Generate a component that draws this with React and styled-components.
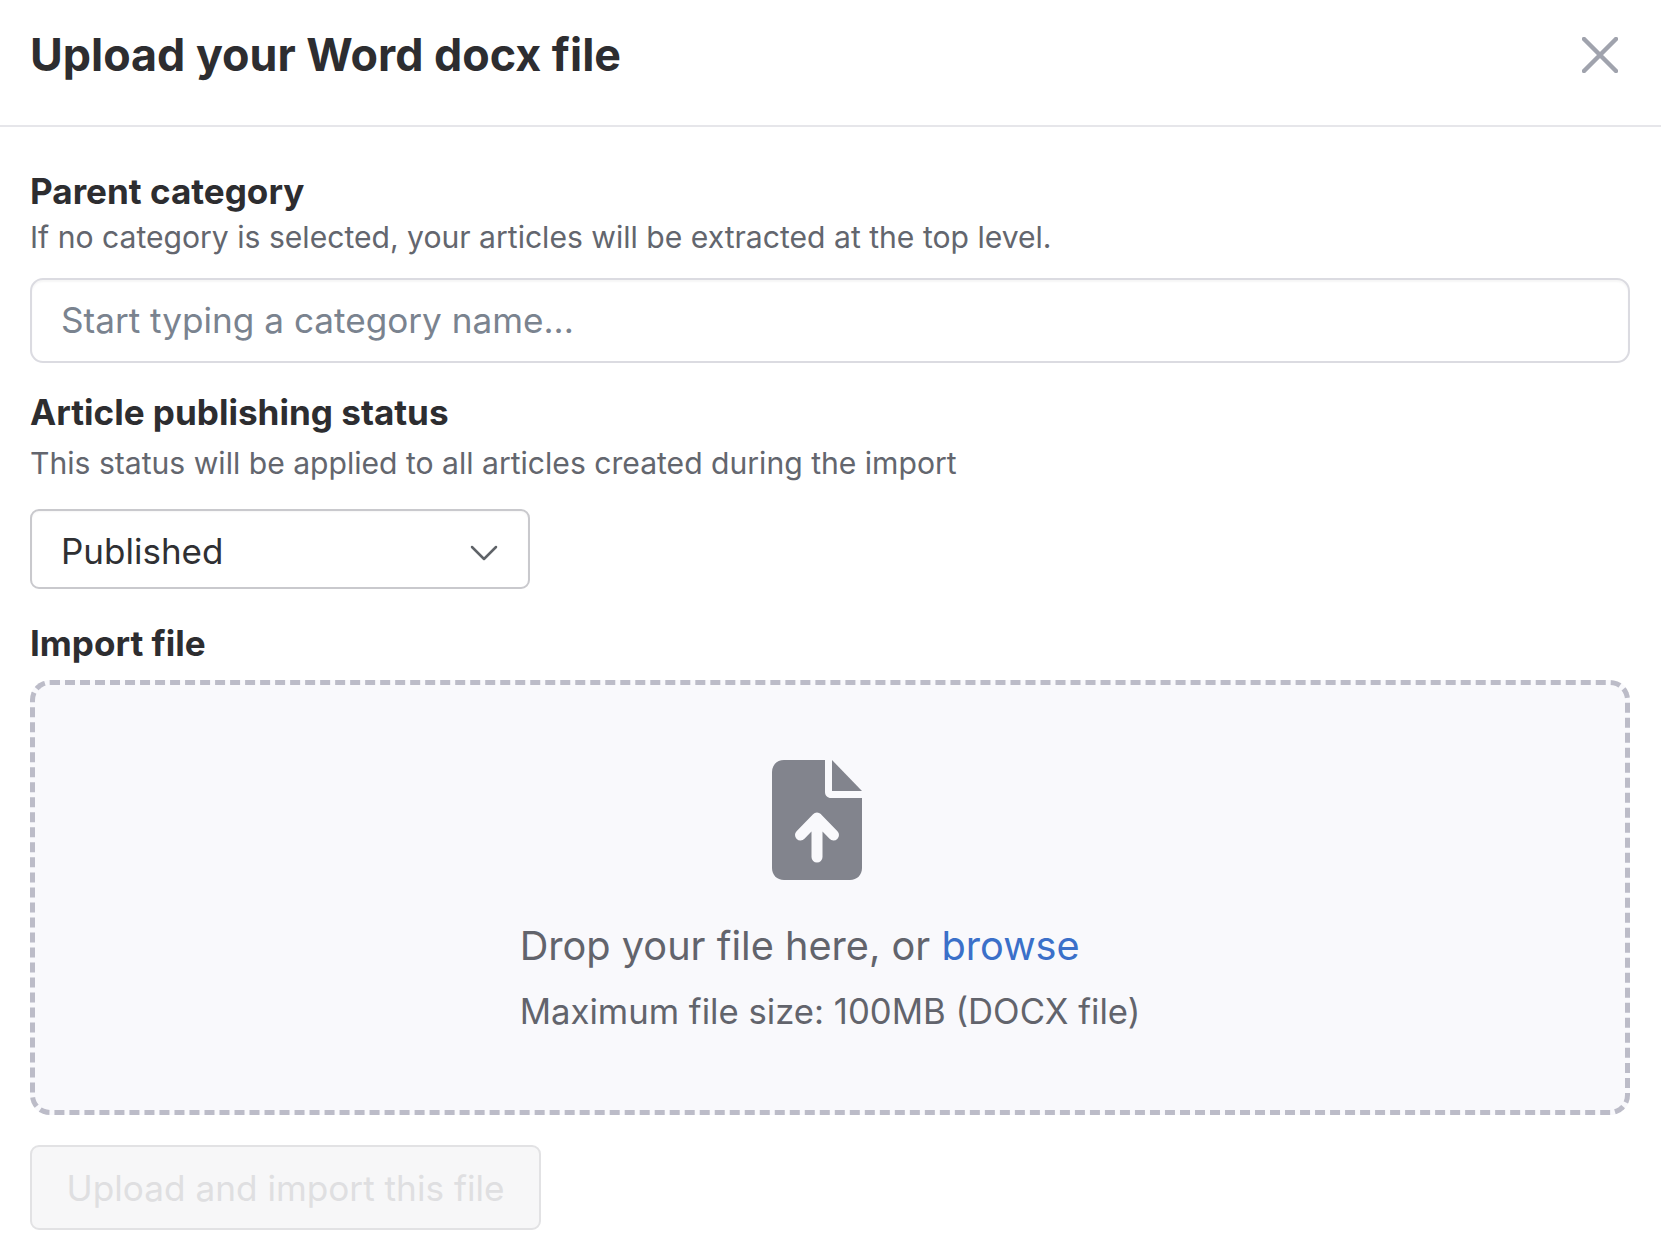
import React from "react";
import styled, { createGlobalStyle } from "styled-components";

const GlobalStyle = createGlobalStyle`
  html, body {
    margin: 0;
    padding: 0;
    background: #ffffff;
  }
  * {
    box-sizing: border-box;
  }
`;

const Dialog = styled.div`
  width: 100%;
  font-family: Inter, "Noto Sans", sans-serif;
  color: #2d2d30;
  background: #ffffff;
`;

const Header = styled.header`
  height: 127px;
  padding: 0 30px;
  display: flex;
  align-items: center;
  justify-content: space-between;
  border-bottom: 2px solid #e6e6ea;
`;

const Title = styled.h1`
  margin: -15px 0 0;
  font-size: 44.8px;
  line-height: 56px;
  font-weight: 700;
`;

const CloseButton = styled.button`
  margin: -16px 13px 0 0;
  width: 36px;
  height: 36px;
  padding: 0;
  display: flex;
  border: none;
  background: none;
  color: #a0a3ad;
`;

const Body = styled.main`
  padding: 45px 31px 0 30px;
  display: flex;
  flex-direction: column;
  align-items: flex-start;
`;

const Label = styled.label`
  margin-top: ${props => props.$top || 0}px;
  margin-bottom: 2px;
  font-size: 35.1px;
  line-height: 38px;
  font-weight: 700;
`;

const Hint = styled.p`
  margin: ${props => props.$top}px 0 0;
  font-size: 30.12px;
  line-height: 40px;
  color: #63666e;
`;

const TextInput = styled.input`
  margin-top: 21px;
  width: 100%;
  height: 85px;
  padding: 0 29px 2px;
  border: 2px solid #dbdbe1;
  border-radius: 13px;
  box-shadow: inset 0 2px 2px rgba(0, 0, 0, 0.04);
  background: #ffffff;
  font-family: inherit;
  font-size: 35.15px;
  outline: none;

  &::placeholder {
    color: #7a838f;
    opacity: 1;
  }
`;

const Select = styled.div`
  margin-top: 26px;
  width: 500px;
  height: 80px;
  padding: 3px 30px 0 29px;
  display: flex;
  align-items: center;
  justify-content: space-between;
  border: 2px solid #c9c9cd;
  border-radius: 9px;
  box-shadow: inset 0 1px 2px rgba(0, 0, 0, 0.04);
  font-size: 35px;
  color: #2f3033;
`;

const Chevron = styled.svg`
  width: 28px;
  height: 16px;
  margin: 5px 0 0;
  color: #5f6368;
`;

const DropZone = styled.div`
  margin-top: 16px;
  width: 100%;
  height: 435px;
  padding-top: 75px;
  display: flex;
  flex-direction: column;
  align-items: center;
  border: 5px dashed #bcbcc8;
  border-radius: 20px;
  background: #f9f9fc;
`;

const FileIcon = styled.svg`
  width: 90px;
  height: 120px;
  margin-right: 26px;
`;

const DropText = styled.div`
  margin-top: 42px;
  display: flex;
  flex-direction: column;
  color: #62646c;
`;

const DropTitle = styled.div`
  font-size: 39.7px;
  line-height: 48px;
`;

const Browse = styled.a`
  color: #3b70c9;
`;

const DropNote = styled.div`
  margin-top: 19px;
  font-size: 34.7px;
  line-height: 44px;
`;

const UploadButton = styled.button`
  margin-top: 30px;
  width: 511px;
  height: 85px;
  padding: 0;
  border: 2px solid #e2e2e4;
  border-radius: 9px;
  background: #f7f7f8;
  color: #dfdfe1;
  font-family: inherit;
  font-size: 35.2px;
`;

export default function App() {
  return (
    <Dialog>
      <GlobalStyle />
      <Header>
        <Title>Upload your Word docx file</Title>
        <CloseButton aria-label="Close">
          <svg width="36" height="36" viewBox="0 0 36 36" fill="none">
            <path d="M2 2L34 34M34 2L2 34" stroke="currentColor" strokeWidth="4.5" strokeLinecap="round" />
          </svg>
        </CloseButton>
      </Header>
      <Body>
        <Label>Parent category</Label>
        <Hint $top={5}>If no category is selected, your articles will be extracted at the top level.</Hint>
        <TextInput placeholder="Start typing a category name..." />

        <Label $top={30}>Article publishing status</Label>
        <Hint $top={10}>This status will be applied to all articles created during the import</Hint>
        <Select>
          Published
          <Chevron viewBox="0 0 28 16" fill="none">
            <path d="M2 2L14 14L26 2" stroke="currentColor" strokeWidth="2.5" strokeLinecap="round" strokeLinejoin="round" />
          </Chevron>
        </Select>

        <Label $top={35}>Import file</Label>
        <DropZone>
          <FileIcon viewBox="0 0 90 120">
            <path
              d="M12 0H53V32C53 35.5 55.5 38 59 38H90V108C90 115 85 120 78 120H12C5 120 0 115 0 108V12C0 5 5 0 12 0Z"
              fill="#82848d"
            />
            <path d="M60 0L90 31H60Z" fill="#82848d" />
            <path
              d="M45 97V60M28.5 75L45 58L61.5 75"
              fill="none"
              stroke="#f9f9fc"
              strokeWidth="11"
              strokeLinecap="round"
              strokeLinejoin="round"
            />
          </FileIcon>
          <DropText>
            <DropTitle>
              Drop your file here, or <Browse>browse</Browse>
            </DropTitle>
            <DropNote>Maximum file size: 100MB (DOCX file)</DropNote>
          </DropText>
        </DropZone>

        <UploadButton disabled>Upload and import this file</UploadButton>
      </Body>
    </Dialog>
  );
}
